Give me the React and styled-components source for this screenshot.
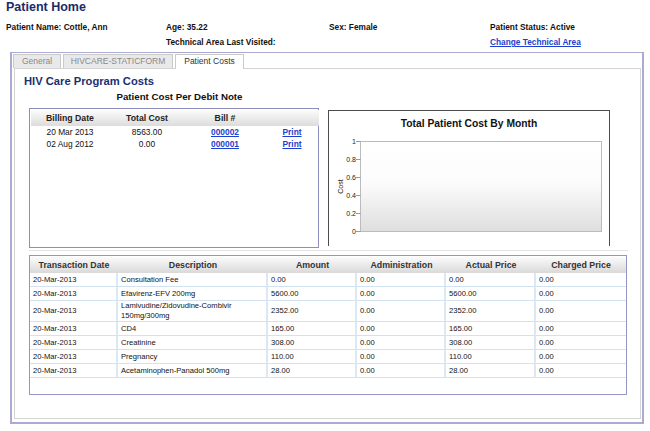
import styled, { createGlobalStyle } from "styled-components";

const GlobalStyle = createGlobalStyle`
  html, body {
    margin: 0;
    padding: 0;
    background: #ffffff;
  }
  body {
    font-family: "Liberation Sans", Arial, sans-serif;
    color: #111111;
  }
  * {
    box-sizing: border-box;
  }
`;

const bills = [
  { date: "20 Mar 2013", total: "8563.00", bill: "000002" },
  { date: "02 Aug 2012", total: "0.00", bill: "000001" },
];

const transactions = [
  ["20-Mar-2013", "Consultation Fee", "0.00", "0.00", "0.00", "0.00"],
  ["20-Mar-2013", "Efavirenz-EFV 200mg", "5600.00", "0.00", "5600.00", "0.00"],
  ["20-Mar-2013", "Lamivudine/Zidovudine-Combivir 150mg/300mg", "2352.00", "0.00", "2352.00", "0.00"],
  ["20-Mar-2013", "CD4", "165.00", "0.00", "165.00", "0.00"],
  ["20-Mar-2013", "Creatinine", "308.00", "0.00", "308.00", "0.00"],
  ["20-Mar-2013", "Pregnancy", "110.00", "0.00", "110.00", "0.00"],
  ["20-Mar-2013", "Acetaminophen-Panadol 500mg", "28.00", "0.00", "28.00", "0.00"],
];

const txColumns = [
  { title: "Transaction Date", width: 88 },
  { title: "Description", width: 150 },
  { title: "Amount", width: 89 },
  { title: "Administration", width: 89 },
  { title: "Actual Price", width: 90 },
  { title: "Charged Price", width: 90 },
];

function CostChart() {
  const ticks = ["1", "0.8", "0.6", "0.4", "0.2", "0"];
  return (
    <svg width="280" height="115" viewBox="0 0 280 115">
      <defs>
        <linearGradient id="plotFill" x1="0" y1="0" x2="0" y2="1">
          <stop offset="0" stopColor="#ffffff" />
          <stop offset="0.45" stopColor="#fcfcfc" />
          <stop offset="1" stopColor="#dedede" />
        </linearGradient>
      </defs>
      <rect x="31.5" y="10.5" width="241" height="90" fill="url(#plotFill)" stroke="#bcbcbc" />
      {ticks.map((t, i) => {
        const y = 10.5 + i * 18;
        return (
          <g key={t}>
            <line x1="27" y1={y} x2="31.5" y2={y} stroke="#9a9a9a" />
            <text
              x="27"
              y={y + 2.5}
              textAnchor="end"
              fontSize="7"
              fontFamily="Liberation Sans, Arial, sans-serif"
              fill="#222"
            >
              {t}
            </text>
          </g>
        );
      })}
      <text
        transform="translate(14 55.5) rotate(-90)"
        textAnchor="middle"
        fontSize="7"
        fontFamily="Liberation Sans, Arial, sans-serif"
        fill="#222"
      >
        Cost
      </text>
    </svg>
  );
}

export default function App() {
  return (
    <>
      <GlobalStyle />
      <Page>
        <Title>Patient Home</Title>
        <InfoGrid>
          <span>Patient Name: Cottle, Ann</span>
          <span>Age: 35.22</span>
          <span>Sex: Female</span>
          <span>Patient Status: Active</span>
          <span />
          <span>Technical Area Last Visited:</span>
          <span />
          <InfoLink href="#">Change Technical Area</InfoLink>
        </InfoGrid>

        <OuterPanel>
          <TabBar>
            <Tab $w={48}>General</Tab>
            <Tab $w={110}>HIVCARE-STATICFORM</Tab>
            <Tab $w={69} $active>
              Patient Costs
            </Tab>
          </TabBar>

          <TabPanel>
            <SectionTitle>HIV Care Program Costs</SectionTitle>
            <SubTitle>Patient Cost Per Debit Note</SubTitle>

            <TopRow>
              <BillingBox>
                <BillingTable>
                  <colgroup>
                    <col style={{ width: 78 }} />
                    <col style={{ width: 76 }} />
                    <col style={{ width: 80 }} />
                    <col style={{ width: 54 }} />
                  </colgroup>
                  <thead>
                    <tr>
                      <BillHead>Billing Date</BillHead>
                      <BillHead>Total Cost</BillHead>
                      <BillHead>Bill #</BillHead>
                      <BillHead />
                    </tr>
                  </thead>
                  <tbody>
                    {bills.map((b) => (
                      <tr key={b.bill}>
                        <BillCell>{b.date}</BillCell>
                        <BillCell>{b.total}</BillCell>
                        <BillCell>
                          <TableLink href="#">{b.bill}</TableLink>
                        </BillCell>
                        <BillCell>
                          <TableLink href="#">Print</TableLink>
                        </BillCell>
                      </tr>
                    ))}
                  </tbody>
                </BillingTable>
              </BillingBox>

              <ChartBox>
                <ChartTitle>Total Patient Cost By Month</ChartTitle>
                <CostChart />
              </ChartBox>
            </TopRow>

            <TxSection>
              <TxBox>
                <TxTable>
                  <colgroup>
                    {txColumns.map((c) => (
                      <col key={c.title} style={{ width: c.width }} />
                    ))}
                  </colgroup>
                  <thead>
                    <tr>
                      {txColumns.map((c) => (
                        <TxHead key={c.title}>{c.title}</TxHead>
                      ))}
                    </tr>
                  </thead>
                  <tbody>
                    {transactions.map((row, r) => (
                      <tr key={r}>
                        {row.map((v, i) => (
                          <TxCell key={i} $last={i === row.length - 1}>
                            {v}
                          </TxCell>
                        ))}
                      </tr>
                    ))}
                  </tbody>
                </TxTable>
              </TxBox>
            </TxSection>
          </TabPanel>
        </OuterPanel>
      </Page>
    </>
  );
}

const Page = styled.div`
  width: 650px;
  height: 431px;
  overflow: hidden;
`;

const Title = styled.h1`
  margin: 0;
  padding-left: 6px;
  font-size: 12.5px;
  line-height: 15px;
  font-weight: bold;
  color: #1b2a6b;
`;

const InfoGrid = styled.div`
  display: grid;
  grid-template-columns: 160px 163px 161px 1fr;
  grid-auto-rows: 15px;
  margin-top: 5px;
  padding-left: 6px;
  font-size: 8.3px;
  font-weight: bold;
  line-height: 15px;
  color: #111;
  white-space: nowrap;
`;

const InfoLink = styled.a`
  color: #1c3fcf;
  text-decoration: underline;
`;

const OuterPanel = styled.div`
  margin: 2px 0 0 10px;
  width: 634px;
  border: 2px solid #aaaad3;
  border-top-width: 1px;
  padding: 1px 1px 3px 2px;
`;

const TabBar = styled.div`
  display: flex;
  align-items: flex-start;
  gap: 2px;
  height: 14px;
  margin-left: -1px;
`;

const Tab = styled.div`
  position: relative;
  z-index: 1;
  width: ${(p) => p.$w}px;
  height: ${(p) => (p.$active ? 15 : 14)}px;
  border: 1px solid #cacaca;
  border-bottom: none;
  background: ${(p) => (p.$active ? "#ffffff" : "#e9e9e9")};
  color: ${(p) => (p.$active ? "#333333" : "#8a8a8a")};
  font-size: 8.5px;
  line-height: 13px;
  text-align: center;
  white-space: nowrap;
`;

const TabPanel = styled.div`
  height: 351px;
  border: 1px solid #d4d4d4;
  padding-top: 5px;
`;

const SectionTitle = styled.h2`
  margin: 0;
  padding-left: 9px;
  font-size: 11.2px;
  line-height: 14px;
  font-weight: bold;
  color: #1b2f72;
`;

const SubTitle = styled.h3`
  margin: 3px 0 0 14px;
  width: 301px;
  font-size: 9.7px;
  line-height: 12px;
  font-weight: bold;
  text-align: center;
  color: #111;
`;

const TopRow = styled.div`
  display: flex;
  align-items: flex-start;
  gap: 9px;
  margin-top: 5px;
  padding-left: 14px;
`;

const BillingBox = styled.div`
  width: 290px;
  height: 140px;
  border: 1px solid #8e8ebd;
  padding: 1px;
`;

const BillingTable = styled.table`
  width: 100%;
  table-layout: fixed;
  border-collapse: collapse;
`;

const BillHead = styled.th`
  height: 16px;
  padding: 0;
  font-size: 8.7px;
  font-weight: bold;
  color: #222;
  text-align: center;
  background: linear-gradient(#fcfcfc, #dcdcdc);
`;

const BillCell = styled.td`
  height: 12px;
  padding: 0;
  font-size: 8.4px;
  line-height: 12px;
  text-align: center;
  color: #111;
  white-space: nowrap;
`;

const TableLink = styled.a`
  color: #1c3fcf;
  font-weight: bold;
  text-decoration: underline;
`;

const ChartBox = styled.div`
  margin-top: 2px;
  width: 282px;
  height: 136px;
  border: 1px solid #4c4c4c;
  border-bottom: none;
  display: flex;
  flex-direction: column;
`;

const ChartTitle = styled.div`
  margin-top: 6px;
  font-size: 10.3px;
  line-height: 14px;
  font-weight: bold;
  text-align: center;
  color: #111;
`;

const TxSection = styled.div`
  margin: 2px 0 0 14px;
  width: 599px;
  border-top: 1px solid #e3e3e3;
  padding-top: 4px;
`;

const TxBox = styled.div`
  width: 598px;
  height: 140px;
  border: 1px solid #9595c3;
  padding-top: 1px;
`;

const TxTable = styled.table`
  width: 596px;
  table-layout: fixed;
  border-collapse: separate;
  border-spacing: 0;
`;

const TxHead = styled.th`
  height: 16px;
  padding: 0;
  font-size: 8.8px;
  font-weight: bold;
  color: #333;
  text-align: center;
  white-space: nowrap;
  background: linear-gradient(#fbfbfb, #d9d9d9);
`;

const TxCell = styled.td`
  height: 14px;
  padding: 0 3px;
  font-size: 7.6px;
  line-height: 10px;
  color: #111;
  vertical-align: middle;
  border-bottom: 1px solid #d2e2f0;
  border-right: ${(p) => (p.$last ? "none" : "2px solid #dbe8f4")};
`;
